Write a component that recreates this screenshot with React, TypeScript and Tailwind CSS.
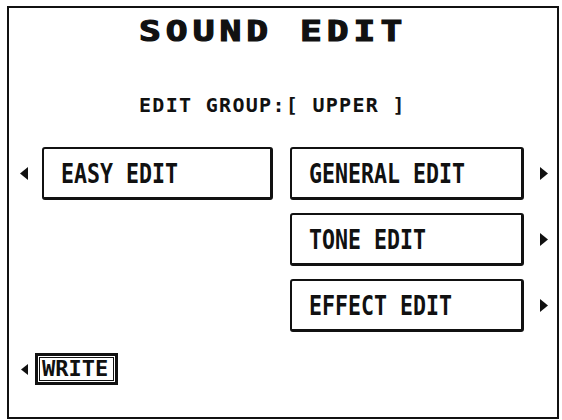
import React from "react";

const Arrow = ({ dir, w = 8, h = 13 }: { dir: "left" | "right"; w?: number; h?: number }) => (
  <svg width={w} height={h} viewBox={`0 0 ${w} ${h}`} className="shrink-0">
    {dir === "left" ? (
      <path d={`M${w} 0 L0 ${h / 2} L${w} ${h} Z`} fill="#111" />
    ) : (
      <path d={`M0 0 L${w} ${h / 2} L0 ${h} Z`} fill="#111" />
    )}
  </svg>
);

const EditBox = ({ label, width }: { label: string; width: string }) => (
  <div
    className={`${width} h-[53px] shrink-0 flex items-center pl-[17px] border-2 border-r-[3px] border-b-[3px] border-[#111] rounded-[3px] bg-white`}
  >
    <span className="inline-block origin-left scale-x-[0.8] text-[27px] font-bold leading-none whitespace-nowrap">
      {label}
    </span>
  </div>
);

const App = () => {
  const rightItems = ["GENERAL EDIT", "TONE EDIT", "EFFECT EDIT"];

  return (
    <div className="w-[562px] h-[420px] bg-white pt-[6px] pl-[7px] text-[#111] font-['DejaVu_Sans_Mono','Liberation_Mono',monospace]">
      <div className="w-[552px] h-[413px] border-2 border-[#111] flex flex-col">
        {/* title */}
        <div className="mt-[9px] pl-[130px] h-[29px] leading-none">
          <span className="inline-block origin-left scale-x-[1.25] text-[29px] font-bold tracking-[4px] whitespace-nowrap [-webkit-text-stroke:1.2px_#111]">
            SOUND EDIT
          </span>
        </div>

        <div className="mt-[49px] pl-[130px] h-[20px] leading-none text-[20px] font-bold tracking-[1.3px] whitespace-nowrap">
          EDIT GROUP:[ UPPER ]
        </div>

        {/* edit menus */}
        <div className="mt-[32px] flex items-start pl-[11px]">
          <div className="flex items-center h-[53px] gap-[14px]">
            <Arrow dir="left" />
            <EditBox label="EASY EDIT" width="w-[231px]" />
          </div>

          <div className="ml-[17px] flex flex-col gap-[13px]">
            {rightItems.map((item) => (
              <div key={item} className="flex items-center gap-[16px]">
                <EditBox label={item} width="w-[234px]" />
                <Arrow dir="right" />
              </div>
            ))}
          </div>
        </div>

        {/* write */}
        <div className="mt-[21px] pl-[12px] flex items-center gap-[7px]">
          <Arrow dir="left" w={7} h={11} />
          <div className="w-[83px] border-[3px] border-[#111] p-[1px]">
            <div className="h-[24px] border border-[#111] flex items-center pl-[2px] text-[22px] font-bold leading-none">
              WRITE
            </div>
          </div>
        </div>
      </div>
    </div>
  );
};

export default App;
